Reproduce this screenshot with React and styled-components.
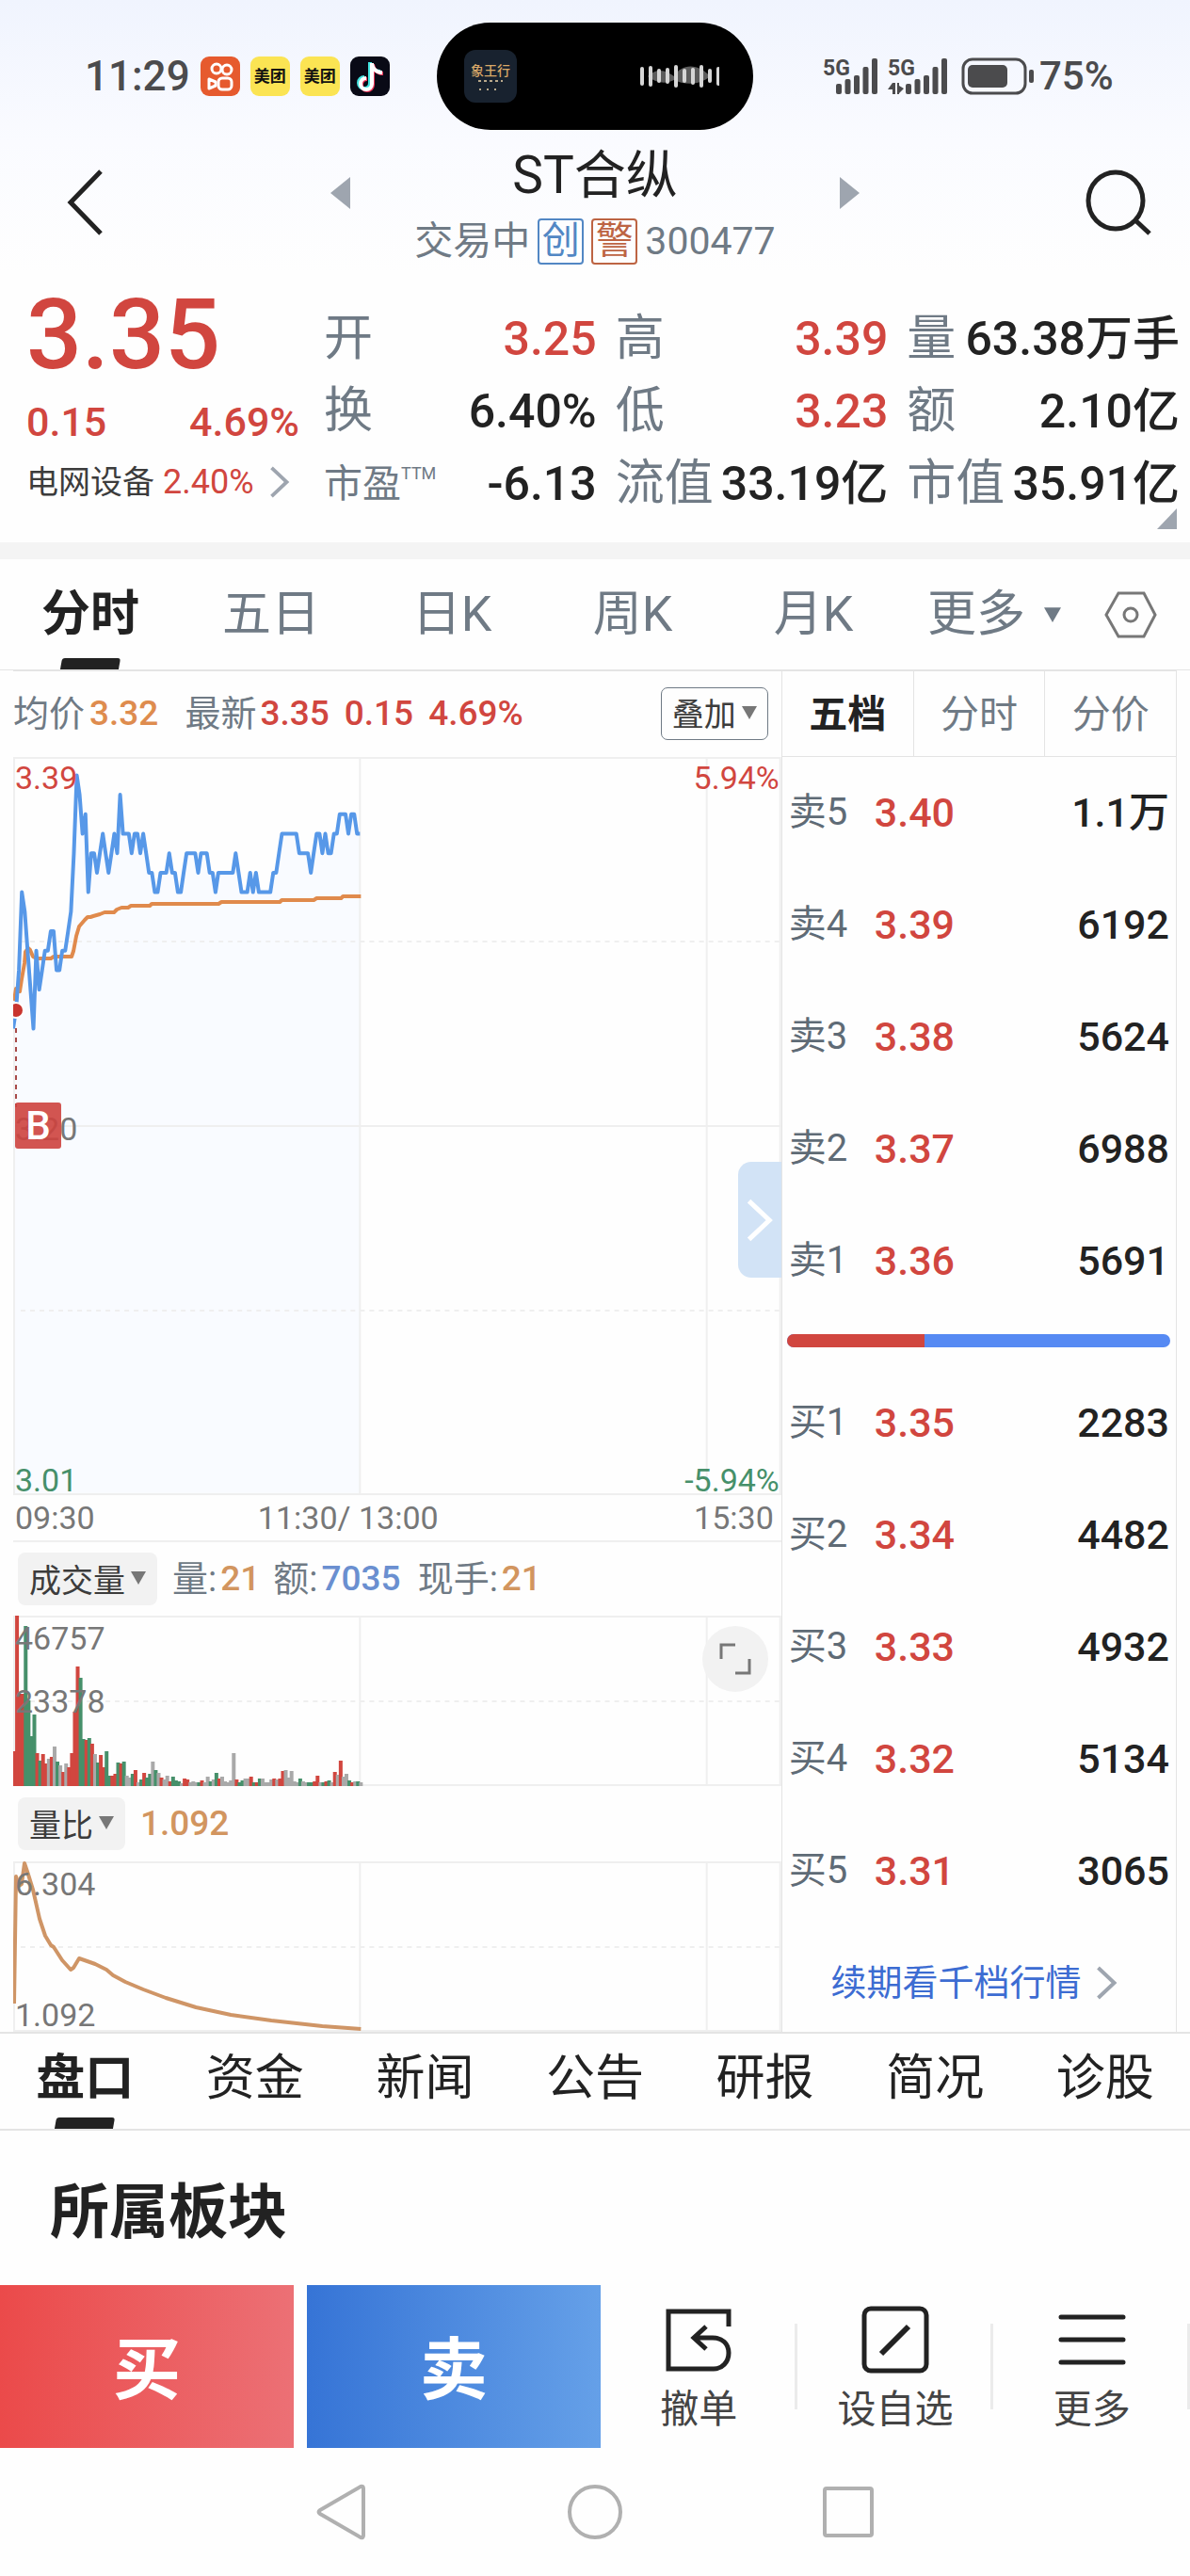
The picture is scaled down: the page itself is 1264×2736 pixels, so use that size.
import React, { useState } from "react";
import styled, { createGlobalStyle, css } from "styled-components";

const red = "#d1463f";
const green = "#46906a";
const slate = "#6f7a85";
const ink = "#222222";
const line = "#e4e4e4";
const grid = "#efefef";

const GlobalStyle = createGlobalStyle`
* {
    box-sizing: border-box;
}
body {
    margin: 0;
    background: #fefefe;
    color: ${ink};
    font-family: Roboto, "Noto Sans CJK SC", sans-serif;
}
button {
    border: none;
    background: none;
    padding: 0;
    margin: 0;
    color: inherit;
    font-family: inherit;
}
svg {
    display: block;
    flex-shrink: 0;
}
`

const Page = styled.div`
display: flex;
flex-direction: column;
`
const Top = styled.header`
background: linear-gradient(#f0f4fe 0, #fafbff 150px, #fefefe 290px);
border-bottom: 18px solid #f4f4f4;
`

/* status bar */
const StatusBar = styled.div`
display: grid;
grid-template-columns: 1fr 336px 1fr;
align-items: center;
height: 150px;
padding-top: 12px;
color: #4b4b4d;
font-size: 44px;
line-height: 44px;
font-weight: 500;
`
const StatusLeft = styled.div`
display: flex;
align-items: center;
gap: 11px;
padding-left: 90px;
`
const StatusRight = styled.div`
display: flex;
align-items: center;
gap: 11px;
padding-left: 74px;
font-size: 42px;
`
const Battery = styled.span`
display: flex;
align-items: center;
gap: 5px;
margin-left: 4px;
`
const AppIcon = styled.span`
display: flex;
align-items: center;
justify-content: center;
width: 42px;
height: 42px;
border-radius: 9px;
background: ${props => props.$bg};
color: #111;
font-size: 17px;
line-height: 20px;
font-weight: 700;
`
const Island = styled.div`
display: flex;
align-items: center;
justify-content: space-between;
height: 114px;
padding: 0 36px 0 29px;
border-radius: 57px;
background: #000;
`
const IslandApp = styled.span`
display: flex;
flex-direction: column;
align-items: center;
justify-content: center;
width: 56px;
height: 56px;
border-radius: 12px;
background: #18222f;
color: #d9a868;
font-family: "Noto Sans CJK SC", sans-serif;
font-size: 14px;
line-height: 18px;
`

/* title */
const TitleBar = styled.div`
display: grid;
grid-template-columns: 1fr 562px 1fr;
align-items: start;
height: 134px;
`
const NavButton = styled.button`
display: flex;
justify-self: ${props => props.$end ? "end" : "start"};
padding: ${props => props.$end ? "30px 40px 0 0" : "30px 0 0 70px"};
`
const TitleGrid = styled.div`
display: flex;
justify-content: space-between;
align-items: flex-start;
`
const Step = styled.button`
display: flex;
padding-top: 38px;
`
const TitleText = styled.div`
display: flex;
flex-direction: column;
align-items: center;
`
const StockName = styled.h1`
margin: 0;
font-size: 55px;
line-height: 72px;
font-weight: 400;
`
const SubTitle = styled.div`
display: flex;
align-items: center;
gap: 8px;
color: ${slate};
font-size: 41px;
line-height: 68px;
`
const Badge = styled.span`
width: 49px;
height: 49px;
border: 2px solid ${props => props.$color};
border-radius: 4px;
color: ${props => props.$color};
font-size: 40px;
line-height: 44px;
text-align: center;
`

/* quote summary */
const Quote = styled.section`
display: flex;
position: relative;
padding: 26px 11px 24px 0;
`
const QuoteMain = styled.div`
display: flex;
flex-direction: column;
flex: 0 0 344px;
padding: 0 26px 0 28px;
color: ${red};
`
const BigPrice = styled.div`
font-size: 104px;
line-height: 92px;
font-weight: 500;
`
const Change = styled.div`
display: flex;
justify-content: space-between;
margin-top: 18px;
font-size: 43px;
line-height: 56px;
font-weight: 500;
`
const Sector = styled.a`
display: flex;
align-items: center;
gap: 9px;
margin-top: 8px;
color: ${red};
text-decoration: none;
font-size: 36px;
line-height: 56px;
white-space: nowrap;
`
const SectorName = styled.span`
color: #3c3c3c;
font-size: 34px;
`
const Stats = styled.dl`
display: grid;
flex: 1;
grid-template-columns: repeat(3, 1fr);
grid-auto-rows: 77px;
column-gap: 20px;
margin: 0;
padding-top: 11px;
`
const Stat = styled.div`
display: flex;
justify-content: space-between;
align-items: center;
white-space: nowrap;
line-height: 76px;
`
const StatLabel = styled.dt`
display: flex;
color: ${slate};
font-size: ${props => props.$small ? "41px" : "52px"};

sup {
    font-size: 18px;
    line-height: 54px;
}
`
const StatValue = styled.dd`
margin: 0;
color: ${props => props.$up ? red : ink};
font-size: 50px;
font-weight: 500;
`
const Fold = styled.span`
position: absolute;
right: 14px;
bottom: 14px;
border-left: 21px solid transparent;
border-bottom: 22px solid #9ea5af;
`

/* tabs */
const Tabs = styled.nav`
display: flex;
height: 118px;
padding-right: 14px;
border-bottom: 1px solid ${line};
`
const SectionTabs = styled(Tabs)`
height: 105px;
padding-right: 0;
border-top: 2px solid ${line};
border-bottom-width: 2px;
`
const Tab = styled.button`
display: flex;
position: relative;
align-items: center;
justify-content: center;
gap: 20px;
flex: 1;
padding-bottom: ${props => props.$lift || 0}px;
color: ${props => props.$active ? ink : props.$color};
font-size: 52px;
line-height: 72px;
font-weight: ${props => props.$active ? 700 : 400};

${props => props.$active && css`
&::after {
    content: "";
    position: absolute;
    bottom: 0;
    left: 50%;
    width: 62px;
    height: 12px;
    margin-left: -31px;
    border-radius: 3px 3px 0 0;
    background: ${ink};
    transform: skewX(-10deg);
}
`}
`
const Settings = styled.button`
display: flex;
align-items: center;
justify-content: center;
flex: 0 0 98px;
`

/* charts */
const Board = styled.main`
display: flex;
margin: 0 14px;
border-top: 1px solid ${line};
`
const Charts = styled.section`
display: flex;
flex-direction: column;
flex: 1;
min-width: 0;
`
const Legend = styled.div`
display: flex;
align-items: center;
height: 91px;
padding: 0 14px 2px 0;
color: ${slate};
font-size: 38px;
line-height: 56px;
white-space: nowrap;
`
const Num = styled.span`
margin: 0 ${props => props.$gap || 0}px 0 ${props => props.$before || 0}px;
color: ${props => props.$color};
font-size: 37px;
font-weight: 500;
`
const Overlay = styled.button`
display: flex;
align-items: center;
gap: 6px;
height: 56px;
margin-left: auto;
padding: 0 11px 2px;
border: 1px solid ${slate};
border-radius: 7px;
color: #3c3c3c;
font-size: 34px;
`
const Plot = styled.div`
position: relative;
height: ${props => props.$height}px;

& > svg {
    width: 100%;
    height: 100%;
}
`
const AxisText = styled.span`
position: absolute;
${props => props.$right ? "right: 2px" : "left: 2px"};
top: ${props => props.$top};
color: ${props => props.$color || "#777777"};
font-size: 34px;
line-height: 40px;
`
const TradeMark = styled.span`
position: absolute;
left: 2px;
top: 367px;
width: 49px;
height: 49px;
border-radius: 3px;
background: rgba(205, 66, 62, 0.9);
color: #fff;
font-size: 42px;
line-height: 49px;
font-weight: 500;
text-align: center;
`
const Handle = styled.button`
display: flex;
position: absolute;
right: 0;
top: 430px;
align-items: center;
justify-content: center;
width: 46px;
height: 123px;
border-radius: 14px 0 0 14px;
background: #d2e3f6;
`
const Expand = styled.button`
display: flex;
position: absolute;
right: 14px;
top: 11px;
align-items: center;
justify-content: center;
width: 70px;
height: 70px;
border-radius: 50%;
background: #f2f2f2;
`
const TimeAxis = styled.div`
display: grid;
grid-template-columns: 32% 1fr auto;
height: 50px;
padding: 0 8px 0 2px;
border-bottom: 2px solid ${grid};
color: #777777;
font-size: 34px;
line-height: 48px;
`
const SubHead = styled.div`
display: flex;
align-items: center;
height: ${props => props.$height}px;
padding-left: 5px;
color: ${slate};
font-size: 38px;
line-height: 56px;
white-space: nowrap;
`
const Picker = styled.button`
display: flex;
align-items: center;
gap: 6px;
height: 56px;
margin-right: 16px;
padding: 0 12px 2px;
border-radius: 8px;
background: #f2f2f2;
color: #3c3c3c;
font-size: 34px;
`

/* order book */
const Book = styled.aside`
display: flex;
flex-direction: column;
flex: 0 0 34%;
border: solid ${line};
border-width: 0 1px;
`
const BookTabs = styled.div`
display: flex;
height: 91px;
border-bottom: 1px solid ${line};
`
const BookTab = styled.button`
flex: 1;
padding-bottom: 6px;
color: ${props => props.$active ? ink : slate};
font-size: 41px;
font-weight: ${props => props.$active ? 700 : 400};

& + & {
    border-left: 1px solid ${line};
}
`
const Levels = styled.table`
width: 100%;
border-collapse: collapse;
font-size: 43px;
line-height: 56px;
font-weight: 500;

tr {
    height: 119px;
}
th, td {
    padding: 0 0 2px;
    text-align: left;
}
th {
    width: 91px;
    padding-left: 7px;
    color: #5f6b76;
    font-size: 40px;
    font-weight: 400;
}
td:nth-child(2) {
    color: ${red};
    padding-left: 7px;
}
td:last-child {
    padding-right: 7px;
    text-align: right;
}
`
const Ratio = styled.div`
display: flex;
height: 14px;
margin: 18px 6px 21px 5px;
border-radius: 7px;
background: #568af3;
overflow: hidden;
`
const RatioBuy = styled.div`
background: ${red};
`
const MoreLevels = styled.a`
display: flex;
align-items: center;
justify-content: center;
gap: 16px;
flex: 1;
padding: 6px 10px 0 0;
color: #3c6cd2;
font-size: 38px;
line-height: 56px;
text-decoration: none;
`

/* bottom */
const SectionTitle = styled.h2`
margin: 0;
padding: 41px 53px 31px;
font-size: 63px;
line-height: 92px;
font-weight: 700;
`
const Actions = styled.footer`
display: flex;
height: 173px;
`
const Trade = styled.button`
flex: 0 0 312px;
margin-right: ${props => props.$gap || 0}px;
padding-bottom: 6px;
background: linear-gradient(90deg, ${props => props.$from}, ${props => props.$to});
color: #fff;
font-size: 72px;
font-weight: 700;
`
const Action = styled.button`
display: flex;
flex-direction: column;
align-items: center;
flex: 1;
padding-top: 22px;
color: #444;
font-size: 41px;
line-height: 60px;
background: linear-gradient(#ebebeb, #ebebeb) right 41px / 3px 91px no-repeat;

svg {
    margin-bottom: 8px;
}
`
const SystemNav = styled.div`
display: flex;
justify-content: center;
gap: 209px;
padding: 38px 0;

button {
    display: flex;
}
`

const stats = [
    { label: "开", value: "3.25", up: true },
    { label: "高", value: "3.39", up: true },
    { label: "量", value: "63.38万手" },
    { label: "换", value: "6.40%" },
    { label: "低", value: "3.23", up: true },
    { label: "额", value: "2.10亿" },
    { label: "市盈", value: "-6.13", ttm: true },
    { label: "流值", value: "33.19亿" },
    { label: "市值", value: "35.91亿" },
]

const sells = [
    ["卖5", "3.40", "1.1万"],
    ["卖4", "3.39", "6192"],
    ["卖3", "3.38", "5624"],
    ["卖2", "3.37", "6988"],
    ["卖1", "3.36", "5691"],
]
const buys = [
    ["买1", "3.35", "2283"],
    ["买2", "3.34", "4482"],
    ["买3", "3.33", "4932"],
    ["买4", "3.32", "5134"],
    ["买5", "3.31", "3065"],
]

// one entry per minute from 09:30, in cents above 3.00
const prices = [
    25, 26, 28, 32, 31, 29, 27, 25, 29, 27, 28, 29, 29, 30, 30, 28, 28, 29, 29, 30,
    31, 34, 38, 37, 35, 36, 32, 34, 34, 33, 34, 35, 34, 33, 34, 35, 34, 37, 35, 35,
    35, 34, 35, 35, 34, 35, 34, 33, 33, 32, 32, 33, 33, 33, 34, 33, 33, 32, 32, 33,
    34, 34, 34, 34, 33, 34, 34, 34, 33, 33, 32, 33, 33, 33, 33, 33, 33, 34, 33, 32,
    32, 32, 33, 32, 33, 32, 32, 32, 32, 32, 33, 33, 34, 35, 35, 35, 35, 35, 35, 34,
    34, 34, 34, 33, 34, 35, 35, 34, 35, 34, 34, 35, 35, 36, 36, 36, 35, 36, 36, 35, 35,
]

// r = up, g = down, n = unchanged
const volumes = ("r37 r181 r98 r98 g170 g91 g53 g76 r35 g27 r34 r24 n29 r31 n42 g26 n22 r15 n24 r20 " +
    "r35 r79 r127 g115 g50 r49 g51 r45 n34 g25 r33 r20 g37 g11 r11 r13 g25 r24 g26 n11 " +
    "n9 g13 r17 n4 g7 r14 g9 g13 n26 g17 n14 r9 n7 n11 r5 g10 g6 g5 n3 r8 " +
    "r7 n4 n5 n4 g4 r6 n4 n10 g5 n7 g14 r8 n10 n5 n4 n6 n35 r7 g4 g6 " +
    "n8 n8 r10 g4 r4 g8 n8 n4 n4 n7 r8 n7 r8 r16 n17 n9 n16 n5 n4 g8 " +
    "n5 n4 g4 g4 r5 r11 n4 g4 r5 g6 n4 r15 n12 r27 n10 n13 g6 r4 n5 g5 n4").split(" ")
const volumeColors = { r: red, g: green, n: "#a9a9a9" }

const avgPoints = "1,259 3,246 7,249 9,236 12,219 13,207 16,203 18,205 21,212 25,214 40,214 43,212 62,212 64,206 67,190 70,180 76,173 79,170 82,170 85,169 92,167 97,165 107,165 110,162 115,160 122,160 125,158 145,158 147,156 218,156 221,154 283,154 285,152 319,152 322,150 348,150 350,148 369,148"
const ratioPoints = "1,151 3,16 6,26 9,24 12,2 16,14 21,30 28,61 34,79 40,89 43,91 52,105 61,115 64,113 70,103 87,109 99,115 106,121 119,128 138,136 162,145 194,155 231,163 274,169 328,175 369,178"

const minute = 368 / 120
const pricePoints = prices
    .map((p, i) => `${(i * minute).toFixed(1)},${(392 - (p - 20) * 20.7).toFixed(1)}`)
    .join(" ")

const Caret = ({ color = "#777777", size = 16 }) => (
    <svg width={size} height={size} viewBox="0 0 16 16" aria-hidden="true">
        <path d="M0 1h16L8 15z" fill={color} />
    </svg>
)

const Chevron = ({ color, width, height, stroke = 4 }) => (
    <svg width={width} height={height} viewBox="0 0 22 36" aria-hidden="true">
        <path d="M2 2l17 16L2 34" fill="none" stroke={color} strokeWidth={stroke} />
    </svg>
)

const Signal = ({ offset, data }) => (
    <svg width={offset + 44} height="42" viewBox={`0 0 ${offset + 44} 42`} fill="#4b4b4d">
        <text x="0" y="20" fontFamily="Roboto, sans-serif" fontWeight="700" fontSize="23">5G</text>
        {[29, 24, 20, 11, 2].map((y, i) => (
            <rect key={y} x={offset + i * 9.5} y={y} width="6" height={40 - y} rx="2" />
        ))}
        {data && <path d="M5 28v12h3V28zM0 35l5-7v7zM10 28v12h2V28zM12 39V31l5 3z" />}
    </svg>
)

const Grid = ({ height, middle }) => (
    <g stroke={grid} strokeWidth="2" fill="none">
        <path d={`M1 ${height}V1H814V${height}M368 0V${height}M736 0V${height}`} />
        <path d={`M0 ${height - 1}H815`} />
        {middle && <path d={`M0 ${middle}H815`} />}
    </g>
)

const Dashes = ({ y }) => (
    <path d={`M8 ${y}H815`} stroke={grid} strokeWidth="2" strokeDasharray="5 5" />
)

const PriceChart = () => (
    <Plot $height={784}>
        <svg viewBox="0 0 815 784" preserveAspectRatio="none" fill="none" role="img" aria-label="分时走势">
            <polygon points={`0,784 ${pricePoints} 368,784`} fill="#f9fbff" />
            <Grid height={784} middle={392} />
            <Dashes y={196} />
            <Dashes y={588} />
            <polyline points={avgPoints} stroke="#e08a4c" strokeWidth="4" strokeLinejoin="round" />
            <polyline points={pricePoints} stroke="#5798e8" strokeWidth="4" strokeLinejoin="round" />
            <path d="M3 288v84" stroke="#a84a48" strokeWidth="2" strokeDasharray="5 5" />
            <circle cx="3" cy="269" r="9" fill="#fff" />
            <circle cx="3" cy="269" r="7" fill="#c9352f" />
        </svg>
        <AxisText $top="2px" $color={red}>3.39</AxisText>
        <AxisText $top="2px" $right $color={red}>5.94%</AxisText>
        <AxisText $top="375px">3.20</AxisText>
        <AxisText $top="748px" $color={green}>3.01</AxisText>
        <AxisText $top="748px" $right $color={green}>-5.94%</AxisText>
        <TradeMark>B</TradeMark>
        <Handle aria-label="收起盘口">
            <Chevron color="#fff" width={28} height={46} />
        </Handle>
    </Plot>
)

const VolumeChart = () => (
    <Plot $height={181}>
        <svg viewBox="0 0 815 181" preserveAspectRatio="none" fill="none" role="img" aria-label="成交量">
            <Grid height={181} />
            <Dashes y={91} />
            {volumes.map((v, i) => {
                const h = Number(v.slice(1))
                return (
                    <rect
                        key={i}
                        x={i * minute - 1}
                        y={181 - h}
                        width="4"
                        height={h}
                        fill={volumeColors[v[0]]}
                    />
                )
            })}
        </svg>
        <AxisText $top="4px">46757</AxisText>
        <AxisText $top="71px">23378</AxisText>
        <Expand aria-label="全屏">
            <svg width="34" height="34" viewBox="0 0 34 34" fill="none" stroke="#777" strokeWidth="3">
                <path d="M2 17V2h15M32 17v15H17" />
            </svg>
        </Expand>
    </Plot>
)

const RatioChart = () => (
    <Plot $height={181}>
        <svg viewBox="0 0 815 181" preserveAspectRatio="none" fill="none" role="img" aria-label="量比">
            <Grid height={181} />
            <Dashes y={91} />
            <polyline points={ratioPoints} stroke="#cf9566" strokeWidth="4" strokeLinejoin="round" />
        </svg>
        <AxisText $top="4px">6.304</AxisText>
        <AxisText $top="143px">1.092</AxisText>
    </Plot>
)

const LevelTable = ({ rows }) => (
    <Levels>
        <tbody>
            {rows.map(([name, price, amount]) => (
                <tr key={name}>
                    <th scope="row">{name}</th>
                    <td>{price}</td>
                    <td>{amount}</td>
                </tr>
            ))}
        </tbody>
    </Levels>
)

const waves = [[24, 42], [23, 43], [26, 39], [25, 40], [22, 44], [26, 39], [25, 41], [22, 44], [26, 39], [24, 42]]

const Status = () => (
    <StatusBar>
        <StatusLeft>
            <span>11:29</span>
            <AppIcon $bg="#e65a2e">
                <svg width="42" height="42" viewBox="0 0 42 42" fill="none" stroke="#fff" strokeWidth="3">
                    <circle cx="17" cy="13" r="5" />
                    <circle cx="28" cy="14" r="5" />
                    <rect x="19" y="23" width="14" height="12" rx="4" />
                    <path d="M9 24v10l7-3v-4z" strokeLinejoin="round" />
                </svg>
            </AppIcon>
            <AppIcon $bg="#fbe453">美团</AppIcon>
            <AppIcon $bg="#fbe453">美团</AppIcon>
            <AppIcon $bg="#090a16">
                <svg width="42" height="42" viewBox="0 0 42 42" fill="none" strokeWidth="4">
                    <path d="M21 6v22a6 6 0 1 1-6-6M21 7c1 5 5 9 11 9" stroke="#42e4e0" />
                    <path d="M24 8v22a6 6 0 1 1-6-6M24 9c1 5 5 9 11 9" stroke="#ee3458" />
                    <path d="M23 7v22a6 6 0 1 1-6-6M23 8c1 5 5 9 11 9" stroke="#fff" />
                </svg>
            </AppIcon>
        </StatusLeft>
        <Island>
            <IslandApp>
                象王行
                <svg width="26" height="14" viewBox="0 0 26 14" stroke="#b9a98c" strokeWidth="2">
                    <path d="M0 3h26" strokeDasharray="3 3" />
                    <path d="M1 12h24" strokeDasharray="2 6" />
                </svg>
            </IslandApp>
            <svg width="84" height="66" viewBox="0 0 84 66" fill="#d6d6d6">
                <path d="M8 33c10-10 20-6 28 0 8-14 26-14 38 0-10 10-28 9-38 4-8 4-18 4-28-4z" fill="#5c5c5c" />
                {waves.map(([top, bottom], i) => (
                    <rect key={i} x={i * 9} y={top - 1} width="4" height={bottom - top + 2} rx="2" />
                ))}
            </svg>
        </Island>
        <StatusRight>
            <Signal offset={14} />
            <Signal offset={19} data />
            <Battery>
                <svg width="78" height="40" viewBox="0 0 78 40" fill="#4b4b4d">
                    <rect x="2" y="2" width="66" height="36" rx="10" fill="none" stroke="#4b4b4d" strokeWidth="3" />
                    <rect x="7" y="8" width="42" height="24" rx="5" />
                    <rect x="72" y="13" width="5" height="14" rx="2" />
                </svg>
                <span>75%</span>
            </Battery>
        </StatusRight>
    </StatusBar>
)

export const StockPage = () => {
    const [period, setPeriod] = useState("分时");
    const [bookTab, setBookTab] = useState("五档");
    const [section, setSection] = useState("盘口");

    return (
        <Page>
            <Top>
                <Status />
                <TitleBar>
                    <NavButton aria-label="返回">
                        <svg width="40" height="70" viewBox="0 0 40 70" fill="none" stroke={ink} strokeWidth="5">
                            <path d="M37 2L5 35l32 33" />
                        </svg>
                    </NavButton>
                    <TitleGrid>
                        <Step aria-label="上一只">
                            <svg width="21" height="34" viewBox="0 0 21 34"><path d="M21 0v34L0 17z" fill="#9ea5af" /></svg>
                        </Step>
                        <TitleText>
                            <StockName>ST合纵</StockName>
                            <SubTitle>
                                交易中
                                <Badge $color="#5287c4">创</Badge>
                                <Badge $color="#bd6443">警</Badge>
                                300477
                            </SubTitle>
                        </TitleText>
                        <Step aria-label="下一只">
                            <svg width="21" height="34" viewBox="0 0 21 34"><path d="M0 0v34l21-17z" fill="#9ea5af" /></svg>
                        </Step>
                    </TitleGrid>
                    <NavButton $end aria-label="搜索">
                        <svg width="72" height="70" viewBox="0 0 72 70" fill="none" stroke={ink} strokeWidth="5">
                            <ellipse cx="33" cy="33" rx="29" ry="30" />
                            <path d="M54 54l15 14" />
                        </svg>
                    </NavButton>
                </TitleBar>
                <Quote>
                    <QuoteMain>
                        <BigPrice>3.35</BigPrice>
                        <Change><span>0.15</span><span>4.69%</span></Change>
                        <Sector href="#sector">
                            <SectorName>电网设备</SectorName>
                            2.40%
                            <Chevron color="#9ea5af" width={36} height={34} stroke={4} />
                        </Sector>
                    </QuoteMain>
                    <Stats>
                        {stats.map(item => (
                            <Stat key={item.label}>
                                <StatLabel $small={item.ttm}>
                                    {item.label}
                                    {item.ttm && <sup>TTM</sup>}
                                </StatLabel>
                                <StatValue $up={item.up}>{item.value}</StatValue>
                            </Stat>
                        ))}
                    </Stats>
                    <Fold />
                </Quote>
            </Top>

            <Tabs>
                {["分时", "五日", "日K", "周K", "月K", "更多"].map(name => (
                    <Tab key={name} $active={period === name} $color={slate} onClick={() => setPeriod(name)}>
                        {name}
                        {name === "更多" && <Caret color={slate} size={18} />}
                    </Tab>
                ))}
                <Settings aria-label="设置">
                    <svg width="56" height="50" viewBox="0 0 56 50" fill="none" stroke="#777" strokeWidth="3">
                        <path d="M15 2h27l12 23-12 23H15L2 25z" />
                        <circle cx="28" cy="25" r="7" />
                    </svg>
                </Settings>
            </Tabs>

            <Board>
                <Charts>
                    <Legend>
                        均价<Num $color="#de8c4e" $before={5} $gap={28}>3.32</Num>
                        最新<Num $color={red} $before={4} $gap={16}>3.35</Num>
                        <Num $color={red} $gap={16}>0.15</Num>
                        <Num $color={red}>4.69%</Num>
                        <Overlay>叠加<Caret /></Overlay>
                    </Legend>
                    <PriceChart />
                    <TimeAxis>
                        <span>09:30</span>
                        <span>11:30/ 13:00</span>
                        <span>15:30</span>
                    </TimeAxis>
                    <SubHead $height={78}>
                        <Picker>成交量<Caret /></Picker>
                        量:<Num $color="#d2955f" $before={4} $gap={14}>21</Num>
                        额:<Num $color="#6a8fd0" $before={4} $gap={18}>7035</Num>
                        现手:<Num $color="#d2955f" $before={4}>21</Num>
                    </SubHead>
                    <VolumeChart />
                    <SubHead $height={80}>
                        <Picker>量比<Caret /></Picker>
                        <Num $color="#d2955f">1.092</Num>
                    </SubHead>
                    <RatioChart />
                </Charts>
                <Book>
                    <BookTabs>
                        {["五档", "分时", "分价"].map(name => (
                            <BookTab key={name} $active={bookTab === name} onClick={() => setBookTab(name)}>
                                {name}
                            </BookTab>
                        ))}
                    </BookTabs>
                    <LevelTable rows={sells} />
                    <Ratio><RatioBuy style={{ width: "36%" }} /></Ratio>
                    <LevelTable rows={buys} />
                    <MoreLevels href="#levels">
                        续期看千档行情
                        <Chevron color="#9ea5af" width={23} height={36} />
                    </MoreLevels>
                </Book>
            </Board>

            <SectionTabs>
                {["盘口", "资金", "新闻", "公告", "研报", "简况", "诊股"].map(name => (
                    <Tab key={name} $active={section === name} $color={ink} $lift={6} onClick={() => setSection(name)}>
                        {name}
                    </Tab>
                ))}
            </SectionTabs>
            <SectionTitle>所属板块</SectionTitle>

            <Actions>
                <Trade $from="#eb4a4a" $to="#ec7075" $gap={14}>买</Trade>
                <Trade $from="#3674d6" $to="#65a0e8">卖</Trade>
                <Action>
                    <svg width="72" height="72" viewBox="0 0 72 72" fill="none" stroke={ink} strokeWidth="5">
                        <path d="M68 22V6H4v61h48c9 0 16-7 16-17s-7-16-17-16H32M44 22L31 34l13 12" />
                    </svg>
                    撤单
                </Action>
                <Action>
                    <svg width="72" height="72" viewBox="0 0 72 72" fill="none" stroke={ink} strokeWidth="5">
                        <rect x="3" y="3" width="66" height="66" rx="7" />
                        <path d="M21 51l29-29" strokeWidth="6" />
                    </svg>
                    设自选
                </Action>
                <Action>
                    <svg width="72" height="72" viewBox="0 0 72 72" fill="none" stroke={ink} strokeWidth="5" strokeLinecap="round">
                        <path d="M3 12h66M3 36h66M3 60h66" />
                    </svg>
                    更多
                </Action>
            </Actions>
            <SystemNav>
                <button aria-label="返回键">
                    <svg width="60" height="60" viewBox="0 0 60 60" fill="none" stroke="#b0b0b0" strokeWidth="4">
                        <path d="M7 28L50 3q3-1 3 2v50q0 3-3 2L7 32q-3-2 0-4z" />
                    </svg>
                </button>
                <button aria-label="主屏幕">
                    <svg width="60" height="60" viewBox="0 0 60 60" fill="none" stroke="#b0b0b0" strokeWidth="4">
                        <circle cx="30" cy="30" r="27" />
                    </svg>
                </button>
                <button aria-label="最近任务">
                    <svg width="60" height="60" viewBox="0 0 60 60" fill="none" stroke="#b0b0b0" strokeWidth="4">
                        <rect x="5" y="5" width="50" height="50" rx="2" />
                    </svg>
                </button>
            </SystemNav>
        </Page>
    )
}

export default function App() {
    return (
        <>
            <GlobalStyle />
            <StockPage />
        </>
    )
}
